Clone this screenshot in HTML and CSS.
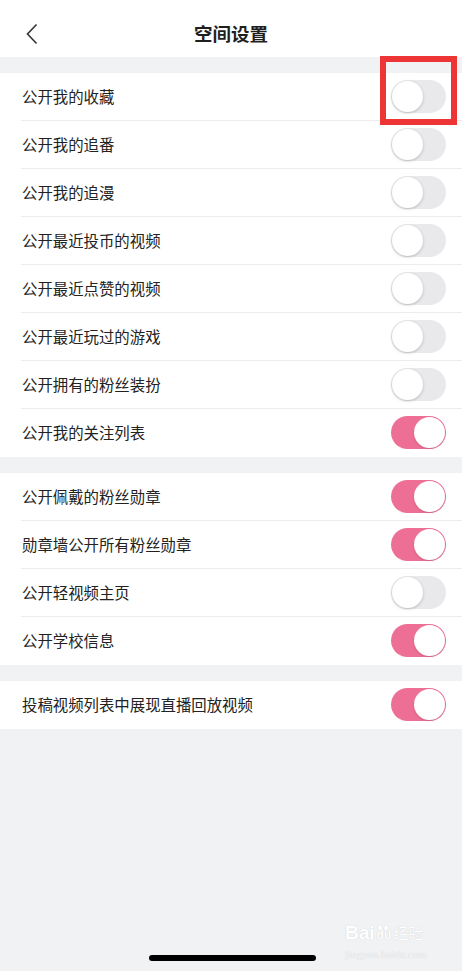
FILE: index.html
```html
<!DOCTYPE html>
<html lang="zh-CN">

<head>
    <meta charset="UTF-8">
    <meta name="viewport" content="width=device-width, initial-scale=1.0">
    <title>空间设置</title>

    <link rel="stylesheet" href="styles.css">
</head>

<body>
    <!-- Top bar -->
    <header class="topbar">
        <span class="back">
            <svg width="12" height="22" viewBox="0 0 12 22">
                <path d="M10.5 1.5 L1.5 11 L10.5 20.5" fill="none" stroke="#333" stroke-width="1.6" />
            </svg>
        </span>
        <h1>空间设置</h1>
    </header>

    <section class="group">
        <div class="row"><div class="inner"><span>公开我的收藏</span><span class="switch"><i class="mark"></i></span></div></div>
        <div class="row"><div class="inner"><span>公开我的追番</span><span class="switch"></span></div></div>
        <div class="row"><div class="inner"><span>公开我的追漫</span><span class="switch"></span></div></div>
        <div class="row"><div class="inner"><span>公开最近投币的视频</span><span class="switch"></span></div></div>
        <div class="row"><div class="inner"><span>公开最近点赞的视频</span><span class="switch"></span></div></div>
        <div class="row"><div class="inner"><span>公开最近玩过的游戏</span><span class="switch"></span></div></div>
        <div class="row"><div class="inner"><span>公开拥有的粉丝装扮</span><span class="switch"></span></div></div>
        <div class="row"><div class="inner"><span>公开我的关注列表</span><span class="switch on"></span></div></div>
    </section>

    <section class="group">
        <div class="row"><div class="inner"><span>公开佩戴的粉丝勋章</span><span class="switch on"></span></div></div>
        <div class="row"><div class="inner"><span>勋章墙公开所有粉丝勋章</span><span class="switch on"></span></div></div>
        <div class="row"><div class="inner"><span>公开轻视频主页</span><span class="switch"></span></div></div>
        <div class="row"><div class="inner"><span>公开学校信息</span><span class="switch on"></span></div></div>
    </section>

    <section class="group">
        <div class="row"><div class="inner"><span>投稿视频列表中展现直播回放视频</span><span class="switch on"></span></div></div>
    </section>

    <!-- watermark -->
    <div class="watermark">
        <div class="wm-logo">Bai<span class="paw">du</span><span class="wm-cn">经验</span></div>
        <div class="wm-url">jingyan.baidu.com</div>
    </div>

    <div class="home-bar"></div>
</body>

</html>
```

FILE: styles.css
```css
html,
body {
    margin: 0;
    height: 100%;
}

body {
    position: relative;
    background-color: #f1f2f4;
    font-family: "Noto Sans CJK SC", "Noto Sans", sans-serif;
    color: #222;
}

.topbar {
    position: relative;
    height: 57px;
    background-color: white;
    display: flex;
    align-items: center;
    justify-content: center;
}

.topbar h1 {
    margin: 0;
    font-size: 18.5px;
    font-weight: bold;
    color: #1f1f1f;
    padding-top: 8px;
}

.back {
    position: absolute;
    left: 26px;
    top: 23px;
    line-height: 0;
}

.group {
    margin-top: 16px;
    background-color: white;
}

.row {
    padding-left: 21px;
}

.inner {
    height: 47px;
    display: flex;
    align-items: center;
    justify-content: space-between;
    padding-right: 16px;
    border-bottom: 1px solid #ececec;
    font-size: 15.4px;
}

.inner span:first-child {
    padding-left: 1px;
    padding-bottom: 1px;
}

.row:last-child .inner {
    border-bottom: 1px solid white;
}

.switch {
    position: relative;
    width: 55px;
    height: 33px;
    border-radius: 17px;
    background-color: #e9e9eb;
    box-sizing: border-box;
}

.switch::before {
    content: "";
    position: absolute;
    left: 1px;
    top: 1px;
    width: 31px;
    height: 31px;
    border-radius: 50%;
    background-color: white;
    box-shadow: 0 1px 3px rgba(0, 0, 0, 0.22);
}

.switch.on {
    background-color: #ee6f95;
}

.switch.on::before {
    left: 23px;
    box-shadow: 0 1px 2px rgba(0, 0, 0, 0.15);
}

.mark {
    position: absolute;
    left: -11px;
    right: -11px;
    top: -24px;
    bottom: -12px;
    border: 6px solid #ee3535;
}

.watermark {
    position: absolute;
    left: 345px;
    top: 920px;
    color: #fff;
    text-shadow: 0 0 1px #c4c5c8;
}

.wm-logo {
    font-family: "Liberation Sans", sans-serif;
    font-size: 19px;
    font-weight: bold;
    line-height: 26px;
}

.paw {
    position: relative;
    font-size: 12px;
    padding: 0 2px;
}

.paw::before {
    content: "\2022\2022";
    position: absolute;
    left: 3px;
    top: -13px;
    font-size: 14px;
    letter-spacing: 1px;
}

.wm-cn {
    font-family: "Noto Sans CJK SC", sans-serif;
    font-size: 15px;
    font-weight: normal;
}

.wm-url {
    font-family: "Liberation Serif", serif;
    font-size: 11px;
    line-height: 12px;
    color: #f6f6f7;
}

.home-bar {
    position: absolute;
    left: 149px;
    top: 955px;
    width: 167px;
    height: 6px;
    border-radius: 3px;
    background-color: #000;
}
```
